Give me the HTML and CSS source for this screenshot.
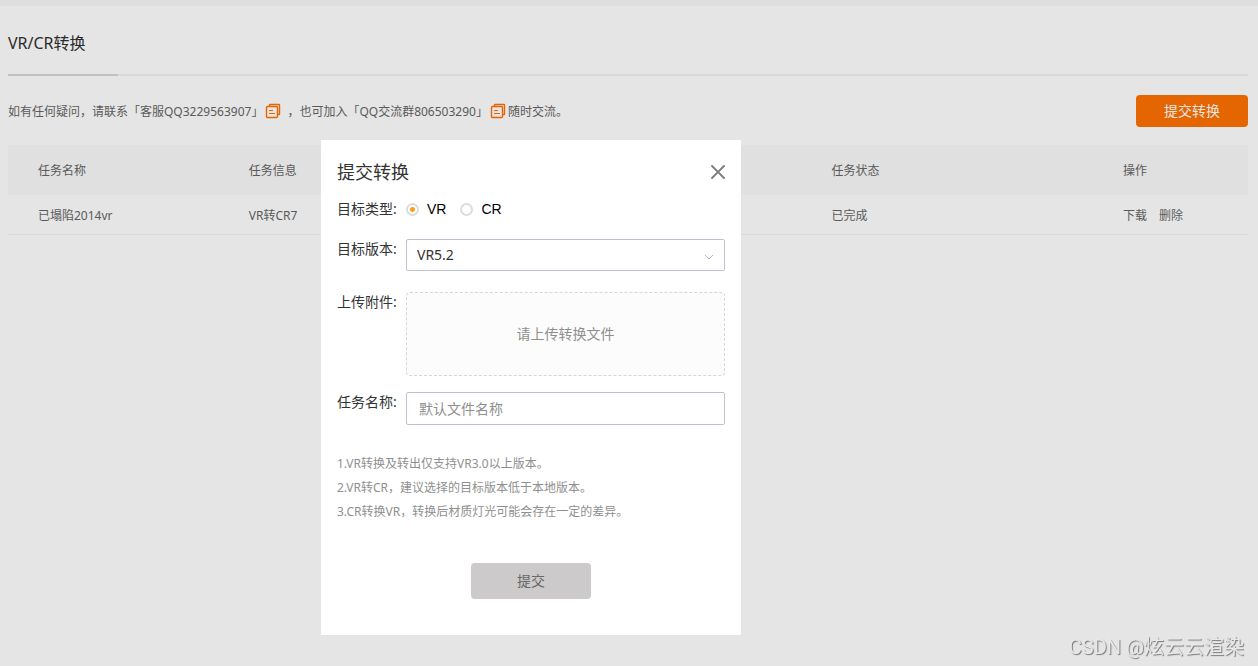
FILE: index.html
```html
<!DOCTYPE html>
<html lang="zh-CN">
<head>
<meta charset="utf-8">
<meta name="viewport" content="width=device-width, initial-scale=1">
<title>VR/CR转换</title>
<link rel="stylesheet" href="styles.css">
</head>
<body>
<main class="page">
  <header class="page-head">
    <h1 class="page-title">VR/CR转换</h1>
  </header>
  <div class="toolbar">
    <p class="contact">
      <span>如有任何疑问，请联系「客服QQ3229563907」</span>
      <button class="copy" type="button" aria-label="复制QQ号">
        <svg width="16" height="16" viewBox="0 0 16 16" fill="none" stroke="currentColor"><path d="M4.500 3V2Q4.500 1.500 5 1.500H14Q14.500 1.500 14.500 2V11Q14.500 11.500 14 11.500H13" stroke-width="1.400"/><rect x="1.500" y="3.500" width="11" height="11" rx="1" stroke-width="1.400"/><path d="M4 7.500H8M4 10.500H10"/></svg>
      </button>
      <span class="joined">，也可加入「QQ交流群806503290」</span>
      <button class="copy" type="button" aria-label="复制QQ群号">
        <svg width="16" height="16" viewBox="0 0 16 16" fill="none" stroke="currentColor"><path d="M4.500 3V2Q4.500 1.500 5 1.500H14Q14.500 1.500 14.500 2V11Q14.500 11.500 14 11.500H13" stroke-width="1.400"/><rect x="1.500" y="3.500" width="11" height="11" rx="1" stroke-width="1.400"/><path d="M4 7.500H8M4 10.500H10"/></svg>
      </button>
      <span>随时交流。</span>
    </p>
    <button class="primary" type="button">提交转换</button>
  </div>
  <table class="tasks">
    <thead>
      <tr><th class="col-name">任务名称</th><th class="col-info">任务信息</th><th class="col-status">任务状态</th><th class="col-actions">操作</th></tr>
    </thead>
    <tbody>
      <tr>
        <td>已塌陷2014vr</td><td>VR转CR7</td><td>已完成</td>
        <td><div class="actions"><a href="#download">下载</a><a href="#delete">删除</a></div></td>
      </tr>
    </tbody>
  </table>
</main>

<form class="modal" role="dialog" aria-labelledby="modal-title">
  <div class="modal-head">
    <h2 class="modal-title" id="modal-title">提交转换</h2>
    <button class="close" type="button" aria-label="关闭">
      <svg width="14" height="14" viewBox="0 0 14 14" fill="none" stroke="currentColor" stroke-width="1.800" stroke-linecap="round"><path d="M1 1L13 13M13 1L1 13"/></svg>
    </button>
  </div>
  <div class="field field-type" role="radiogroup" aria-labelledby="type-label">
    <span class="label" id="type-label">目标类型:</span>
    <div class="radios">
      <label class="radio"><input type="radio" name="type" checked>VR</label>
      <label class="radio"><input type="radio" name="type">CR</label>
    </div>
  </div>
  <div class="field field-version">
    <label class="label" for="version">目标版本:</label>
    <div class="select">
      <select id="version"><option>VR5.2</option></select>
      <svg class="chevron" width="10" height="6" viewBox="0 0 10 6" fill="none" stroke="currentColor"><path d="M1 1L5 5L9 1"/></svg>
    </div>
  </div>
  <div class="field field-upload">
    <span class="label" id="upload-label">上传附件:</span>
    <button class="upload" type="button" aria-describedby="upload-label">请上传转换文件</button>
  </div>
  <div class="field">
    <label class="label" for="task">任务名称:</label>
    <input class="text" id="task" type="text" placeholder="默认文件名称">
  </div>
  <ol class="notes">
    <li>1.VR转换及转出仅支持VR3.0以上版本。</li>
    <li>2.VR转CR，建议选择的目标版本低于本地版本。</li>
    <li>3.CR转换VR，转换后材质灯光可能会存在一定的差异。</li>
  </ol>
  <button class="submit" type="submit">提交</button>
</form>

<div class="watermark">CSDN @炫云云渲染</div>
</body>
</html>
```

FILE: styles.css
```css
* {
  box-sizing: border-box;
}

body {
  margin: 0;
  min-height: 100vh;
  background: #e5e5e5;
  border-top: 6px solid #dedede;
  color: #5a5a5a;
  font: 12px/20px "Noto Sans", "Noto Sans CJK SC", sans-serif;
}

button,
input,
select {
  font: inherit;
  color: inherit;
}

button {
  border: 0;
  padding: 0;
  background: none;
  cursor: pointer;
}

.page {
  padding: 0 10px 0 8px;
}

.page-head {
  border-bottom: 2px solid #d9d9d9;
  padding: 25px 0 19px;
  position: relative;
}

/* Active tab marker drawn over the divider */
.page-head::after {
  content: "";
  position: absolute;
  left: 0;
  bottom: -2px;
  width: 110px;
  height: 2px;
  background: #c0c1c4;
}

.page-title {
  margin: 0;
  color: #2b2b2b;
  font-size: 16px;
  font-weight: 400;
  line-height: 24px;
}

.toolbar {
  display: flex;
  align-items: center;
  justify-content: space-between;
  padding: 19px 0 18px;
}

.contact {
  display: flex;
  align-items: center;
  gap: 2px;
  margin: 0;
}

.contact span {
  padding-top: 2px;
}

.contact .joined {
  padding-left: 4px;
}

.copy {
  display: flex;
  color: #e56600;
}

.primary {
  width: 112px;
  height: 32px;
  border-radius: 4px;
  background: #e56600;
  color: #e5e5e5;
  font-size: 14px;
}

.tasks {
  width: 100%;
  border-collapse: separate;
  border-spacing: 0;
  table-layout: fixed;
}

.tasks th,
.tasks td {
  padding: 2px 30px 0;
  font-weight: 400;
  text-align: left;
}

.tasks th {
  height: 50px;
  background: #e0e0e0;
}

.tasks td {
  height: 40px;
  border-bottom: 1px solid #d9d9d9;
}

.col-name {
  width: 17%;
}

.col-info {
  width: 47%;
}

.col-actions {
  width: 155px;
}

.actions {
  display: flex;
  gap: 12px;
}

.actions a {
  color: inherit;
  text-decoration: none;
}

.modal {
  position: absolute;
  top: 140px;
  left: 321px;
  width: 420px;
  padding: 20px 16px 36px;
  background: #fff;
  color: #333;
  font-size: 14px;
}

.modal-head {
  display: flex;
  align-items: center;
  justify-content: space-between;
  margin-bottom: 15px;
}

.modal-title {
  margin: 0;
  font-size: 18px;
  font-weight: 400;
  line-height: 24px;
}

.close {
  display: flex;
  color: #7d7d7d;
}

.field {
  display: flex;
  align-items: flex-start;
}

.field-type {
  margin-bottom: 20px;
}

.field-version {
  margin-bottom: 21px;
}

.field-upload {
  margin-bottom: 16px;
}

.label {
  width: 69px;
  flex: none;
}

.radios {
  display: flex;
  gap: 14px;
  color: #000;
  font-family: "Liberation Sans", Arial, sans-serif;
}

.radio {
  display: flex;
  align-items: center;
  gap: 8px;
}

.radio input {
  appearance: none;
  width: 13px;
  height: 13px;
  margin: 0;
  border: 2px solid #dcdcdc;
  border-radius: 50%;
  background: #fff;
}

.radio input:checked {
  background: radial-gradient(circle, #ff9f1a 2px, #fff 3px);
}

.select {
  position: relative;
  flex: 1;
}

.select select {
  display: block;
  appearance: none;
  width: 100%;
  height: 32px;
  padding: 0 10px;
  border: 1px solid #bec3d2;
  border-radius: 2px;
  background: #fff;
}

.chevron {
  position: absolute;
  right: 11px;
  bottom: 11px;
  color: #b4b4b8;
  pointer-events: none;
}

.upload {
  flex: 1;
  height: 84px;
  border: 1px dashed #d2d6e0;
  border-radius: 4px;
  background: #fcfcfc;
  color: #8f8f8f;
}

.text {
  flex: 1;
  min-width: 0;
  height: 33px;
  padding: 0 12px;
  border: 1px solid #bec3d2;
  border-radius: 2px;
  background: #fff;
}

.text::placeholder {
  color: #8f8f8f;
}

.notes {
  margin: 27px 0 39px;
  padding: 0;
  list-style: none;
  color: #8f8f8f;
  font-size: 12px;
  line-height: 24px;
}

.submit {
  display: block;
  width: 120px;
  height: 36px;
  margin: 0 auto;
  border-radius: 4px;
  background: #cccaca;
  color: #666;
}

.watermark {
  position: fixed;
  right: 14px;
  bottom: 7px;
  color: #e8e8e8;
  font: 20px/24px Roboto, "Noto Sans CJK SC", sans-serif;
  text-shadow: 1px 1px 1px #777;
}
```
